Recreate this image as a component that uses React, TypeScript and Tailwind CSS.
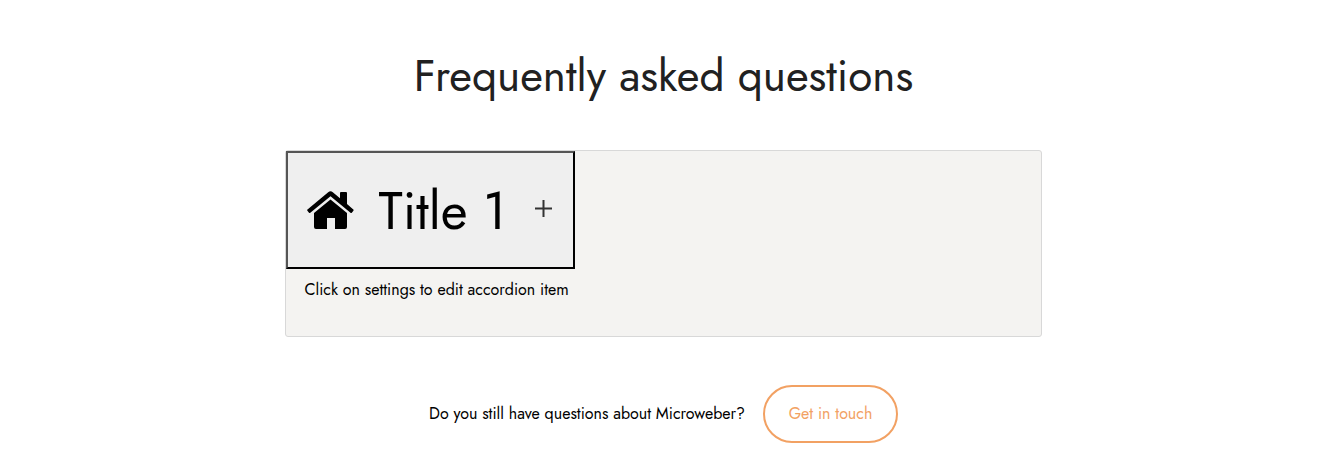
export default function App() {
  return (
    <main className="flex h-[462px] flex-col items-center bg-white pt-[49px] font-['Jost','Lato',sans-serif] text-black">
      <h1 className="h-[101px] whitespace-nowrap text-[44px] leading-[54px] text-[#212121]">
        Frequently asked questions
      </h1>
      <section className="mr-px h-[187px] w-[757px] rounded-[3px] border border-[#d8d8d8] bg-[#f4f3f1]">
        <button className="flex h-[118px] w-[289px] items-center border-2 border-t-[#555] border-r-black border-b-black border-l-[#555] bg-[#efefef] pl-[19px]">
          <svg className="h-[39px] w-[48px] shrink-0" viewBox="0 0 48 39" fill="black" aria-hidden="true">
            <path d="M.5 18.4 21.2 1.3q2.3-1.9 4.6 0L33 7.3V2q0-1 1-1h5q1 0 1 1v11l6.300 5.400q.7.6.1 1.3l-1.6 2q-.6.7-1.3.1L23.5 5.2 3.3 21.8q-.7.6-1.3-.1l-1.6-2q-.6-.7.1-1.3Z" />
            <path d="M7 22 23.5 8.4 40 22V36q0 2-2 2H28V27h-8v11H9q-2 0-2-2Z" />
          </svg>
          <span className="ml-6 w-[132px] whitespace-nowrap pt-[2px] text-left text-[52px] leading-[60px]">Title 1</span>
          <svg className="mb-1 ml-[24px] h-[17px] w-[17px] shrink-0" viewBox="0 0 17 17" aria-hidden="true">
            <path d="M8.5 0V17M0 8.5H17" stroke="#333" strokeWidth="2" />
          </svg>
        </button>
        <p className="pt-[9px] pl-[19px] text-base">Click on settings to edit accordion item</p>
      </section>
      <div className="mt-12 flex items-center gap-[18px] text-base">
        <p className="w-[316px] whitespace-nowrap">Do you still have questions about Microweber?</p>
        <a className="flex h-[58px] w-[135px] items-center justify-center rounded-full border-2 border-[#f2a163] text-[#f2a163]">Get in touch</a>
      </div>
    </main>
  );
}
